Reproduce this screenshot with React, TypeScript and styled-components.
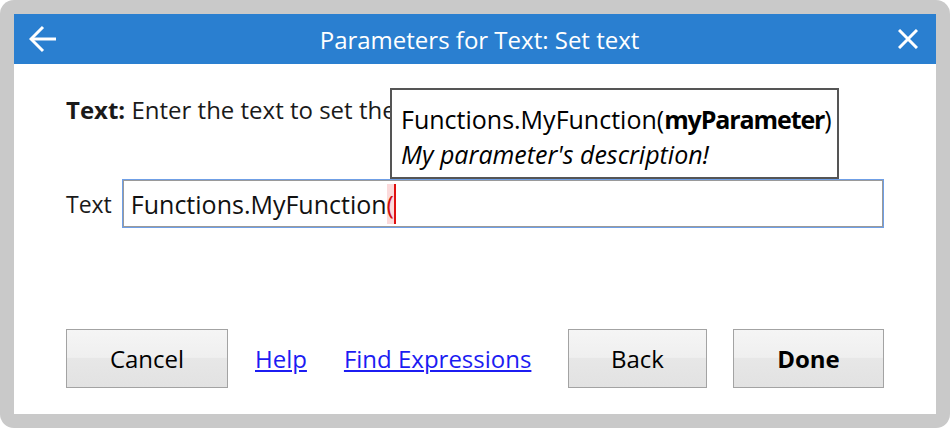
import styled, { createGlobalStyle } from "styled-components";

const GlobalStyle = createGlobalStyle`
    html, body {
        margin: 0;
        padding: 0;
        background: #ffffff;
    }
    body {
        font-family: "Open Sans", "Noto Sans", sans-serif;
    }
`;

const Frame = styled.div`
    width: 950px;
    height: 428px;
    box-sizing: border-box;
    padding: 14px;
    background: #c9c9c9;
    border-radius: 14px;
`;

const Dialog = styled.div`
    display: flex;
    flex-direction: column;
    height: 100%;
    background: #ffffff;
`;

const Header = styled.div`
    display: flex;
    align-items: center;
    height: 50px;
    padding: 0 12px 0 13px;
    background: #2a7fd0;
    color: #ffffff;
`;

const IconButton = styled.button`
    display: flex;
    align-items: center;
    justify-content: center;
    width: 32px;
    height: 32px;
    padding: 0;
    border: none;
    background: none;
    color: #ffffff;
`;

const Title = styled.div`
    flex: 1;
    text-align: center;
    font-size: 24px;
    padding-left: 8px;
`;

const Body = styled.div`
    position: relative;
    flex: 1;
    display: flex;
    flex-direction: column;
    padding: 29px 52px 26px 52px;
`;

const Description = styled.p`
    margin: 0;
    font-size: 24px;
    line-height: 34px;
    color: #1a1a1a;
    white-space: nowrap;
`;

const FieldRow = styled.div`
    position: relative;
    display: flex;
    align-items: center;
    margin-top: 52px;
    gap: 10px;
`;

const Label = styled.span`
    font-size: 23px;
    color: #1a1a1a;
`;

const Field = styled.div`
    flex: 1;
    display: flex;
    align-items: center;
    height: 49px;
    box-sizing: border-box;
    padding: 0 8px;
    border: 1px solid #6f9fe6;
    box-shadow: inset 0 0 0 1px #9a9a9a;
    font-size: 25px;
    color: #111;
`;

const Paren = styled.span`
    display: inline-flex;
    align-items: center;
    height: 40px;
    background: #fbdadb;
    color: #d01010;
    border-right: 2px solid #e01010;
`;

const Tooltip = styled.div`
    position: absolute;
    left: 324px;
    bottom: 49px;
    width: 449px;
    height: 91px;
    box-sizing: border-box;
    padding: 12px 0 0 9px;
    background: #ffffff;
    border: 2px solid #555555;
    font-size: 25px;
    color: #000;
    white-space: nowrap;
`;

const Line = styled.div<{ $italic?: boolean }>`
    font-style: ${(p) => (p.$italic ? "italic" : "normal")};
    line-height: 35px;
`;

const ParamName = styled.b`
    letter-spacing: -1.1px;
`;

const Actions = styled.div`
    display: flex;
    align-items: center;
    margin-top: auto;
`;

const Button = styled.button<{ $width: number; $primary?: boolean }>`
    width: ${(p) => p.$width}px;
    height: 59px;
    border: 1px solid #a3a3a3;
    background: linear-gradient(#f5f5f5 0%, #efefef 48%, #e7e7e7 50%, #e2e2e2 100%);
    font-family: inherit;
    font-size: 24px;
    font-weight: ${(p) => (p.$primary ? 700 : 400)};
    color: #000;
`;

const Links = styled.div`
    display: flex;
    gap: 37px;
    margin-left: 27px;
`;

const LinkText = styled.a`
    font-size: 24px;
    color: #1c1cf2;
    text-decoration: underline;
`;

const Spacer = styled.div`
    flex: 1;
`;

export default function App() {
    return (
        <>
            <GlobalStyle />
            <Frame>
                <Dialog>
                    <Header>
                        <IconButton aria-label="Back">
                            <svg width="28" height="28" viewBox="0 0 28 28" fill="none" stroke="#fff" strokeWidth="3">
                                <path d="M2 14H27" />
                                <path d="M14 2L2 14L14 26" />
                            </svg>
                        </IconButton>
                        <Title>Parameters for Text: Set text</Title>
                        <IconButton aria-label="Close">
                            <svg width="20" height="20" viewBox="0 0 20 20" fill="none" stroke="#fff" strokeWidth="3">
                                <path d="M1 1L19 19M19 1L1 19" />
                            </svg>
                        </IconButton>
                    </Header>
                    <Body>
                        <Description>
                            <b>Text:</b> Enter the text to set the text
                        </Description>
                        <FieldRow>
                            <Label>Text</Label>
                            <Field>
                                Functions.MyFunction<Paren>(</Paren>
                            </Field>
                            <Tooltip>
                                <Line>
                                    Functions.MyFunction(<ParamName>myParameter</ParamName>)
                                </Line>
                                <Line $italic>My parameter's description!</Line>
                            </Tooltip>
                        </FieldRow>
                        <Actions>
                            <Button $width={162}>Cancel</Button>
                            <Links>
                                <LinkText href="#">Help</LinkText>
                                <LinkText href="#">Find Expressions</LinkText>
                            </Links>
                            <Spacer />
                            <Button $width={139}>Back</Button>
                            <Button $width={151} $primary style={{ marginLeft: 26 }}>
                                Done
                            </Button>
                        </Actions>
                    </Body>
                </Dialog>
            </Frame>
        </>
    );
}
